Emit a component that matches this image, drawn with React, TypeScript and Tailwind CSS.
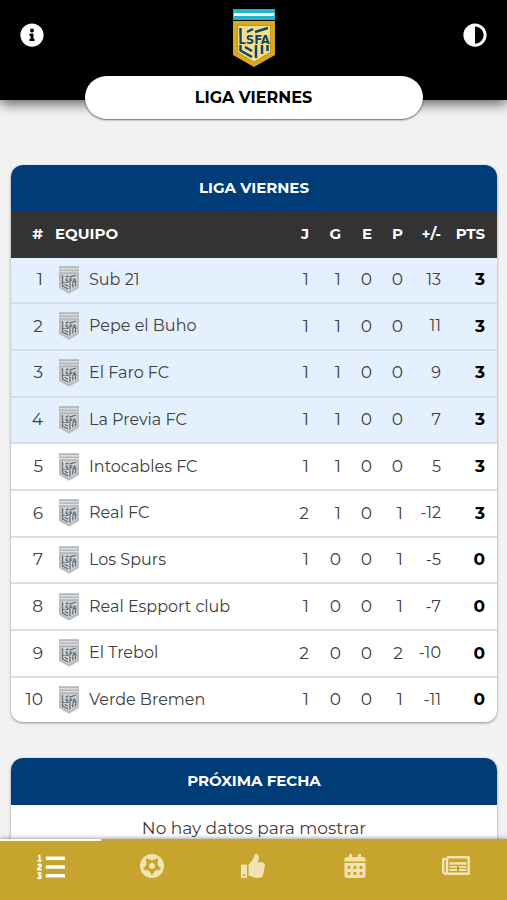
import React from 'react';
import { FaInfoCircle, FaAdjust, FaListOl, FaThumbsUp, FaCalendarAlt } from 'react-icons/fa';

const teams = [
  { name: 'Sub 21', j: 1, g: 1, e: 0, p: 0, diff: 13, pts: 3 },
  { name: 'Pepe el Buho', j: 1, g: 1, e: 0, p: 0, diff: 11, pts: 3 },
  { name: 'El Faro FC', j: 1, g: 1, e: 0, p: 0, diff: 9, pts: 3 },
  { name: 'La Previa FC', j: 1, g: 1, e: 0, p: 0, diff: 7, pts: 3 },
  { name: 'Intocables FC', j: 1, g: 1, e: 0, p: 0, diff: 5, pts: 3 },
  { name: 'Real FC', j: 2, g: 1, e: 0, p: 1, diff: -12, pts: 3 },
  { name: 'Los Spurs', j: 1, g: 0, e: 0, p: 1, diff: -5, pts: 0 },
  { name: 'Real Espport club', j: 1, g: 0, e: 0, p: 1, diff: -7, pts: 0 },
  { name: 'El Trebol', j: 2, g: 0, e: 0, p: 2, diff: -10, pts: 0 },
  { name: 'Verde Bremen', j: 1, g: 0, e: 0, p: 1, diff: -11, pts: 0 },
];

const colors = {
  full: { band: '#22b3cf', stripe: '#ffffff', edge: '#d9a81f', rim: '#c4931a', field: '#f8dd8d', ink: '#0d4768' },
  gray: { band: '#b4b8ba', stripe: '#dcdfe0', edge: '#bcbfc1', rim: '#adb0b2', field: '#d3d6d8', ink: '#5c6164' },
};

function Shield({ tone, className }: { tone: 'full' | 'gray'; className: string }) {
  const c = colors[tone];
  return (
    <svg viewBox="0 0 42 58" className={className} aria-hidden="true">
      <rect width="42" height="11" fill={c.band} />
      <rect x="1" y="4" width="40" height="3" fill={c.stripe} />
      <path d="M0 12H42V46L21 58L0 46Z" fill={c.edge} />
      <path d="M4 16H38V43.500L21 53.500L4 43.500Z" fill={c.rim} />
      <path d="M5 17H37V43L21 52.500L5 43Z" fill={c.field} />
      <text x="21" y="35" fill={c.ink} fontSize="13" fontFamily="'DejaVu Sans Condensed', 'DejaVu Sans', sans-serif" fontWeight="700" textAnchor="middle">LSFA</text>
      {/* bars over and under the initials */}
      <g fill="none" stroke={c.ink} strokeWidth="2.500">
        <path d="M7.500 19V26M14 23L20 20M22 23L35 19" />
        <path d="M7.500 36V41.500L19 48M12 38L19 42M23 36V49M29 36V45M34.500 36V42" />
      </g>
    </svg>
  );
}

function BallIcon() {
  return (
    <svg viewBox="0 0 24 24" className="w-6 h-6" aria-hidden="true">
      <circle cx="12" cy="12" r="12" fill="currentColor" />
      {/* five-armed seam pattern with a light centre */}
      <path
        d="M12 20.500L9.100 16L3.500 15L7.200 10.500L6.400 4.800L12 7L17.600 4.800L16.800 10.500L20.500 15L14.900 16Z"
        fill="#c6a42d"
        stroke="#c6a42d"
        strokeLinejoin="round"
      />
      <circle cx="12" cy="12" r="3" fill="currentColor" />
    </svg>
  );
}

function NewsIcon() {
  return (
    <svg viewBox="0 0 28 20" className="w-7 h-5" fill="none" stroke="currentColor" aria-hidden="true">
      <path d="M5 1.300H26.700V17.700H3.200C1.800 17.700 1.200 16.800 1.200 15.500V3H5V15.500C5 16.800 4.200 17.700 3.200 17.700" strokeWidth="2.400" strokeLinejoin="round" />
      <path d="M7.500 7.500H24.500" strokeWidth="2.500" />
      <path d="M7.500 10.800H15M17 10.800H24.500M7.500 14H15M17 14H24.500" strokeWidth="1.800" />
    </svg>
  );
}

export default function App() {
  return (
    <div className="h-screen flex flex-col overflow-hidden bg-[#f2f2f2] font-['Montserrat','Inter',sans-serif] text-[#404040]">
      <header className="relative z-10 shrink-0 h-[100px] bg-black shadow-[0_4px_12px_rgba(0,0,0,0.6)]">
        <div className="flex items-start justify-between px-5 pt-[9px]">
          <button aria-label="Información" className="mt-[14px] text-white"><FaInfoCircle className="w-6 h-6" /></button>
          <Shield tone="full" className="w-[42px] h-[58px]" />
          <button aria-label="Cambiar tema" className="mt-[14px] text-white"><FaAdjust className="w-6 h-6" /></button>
        </div>
        {/* Tournament name, hangs over the header edge */}
        <h1 className="absolute left-1/2 top-[76px] -translate-x-1/2 w-2/3 h-[43px] rounded-full bg-white text-black text-base font-bold flex items-center justify-center shadow-[0_1px_2px_rgba(0,0,0,0.6)]">
          LIGA VIERNES
        </h1>
      </header>

      <main className="flex-1 min-h-0 overflow-hidden px-[10px] pt-[65px] pl-[11px]">
        <section className="rounded-xl overflow-hidden bg-white shadow-[0_1px_3px_rgba(0,0,0,0.4)]">
          <h2 className="h-[46px] bg-[#003c78] text-white text-[15px] font-bold flex items-center justify-center">LIGA VIERNES</h2>
          <table className="w-full h-[511px] table-fixed border-collapse text-right text-[17px]">
            <colgroup>
              <col className="w-8" />
              <col />
              <col className="w-[32px]" />
              <col className="w-[32px]" />
              <col className="w-[31px]" />
              <col className="w-[31px]" />
              <col className="w-[38px]" />
              <col className="w-[56px]" />
            </colgroup>
            <thead className="bg-[#333333] text-white text-[15px]">
              <tr className="h-[47px]">
                <th>#</th>
                <th className="text-left pl-3">EQUIPO</th>
                <th>J</th>
                <th>G</th>
                <th>E</th>
                <th>P</th>
                <th>+/-</th>
                <th className="pr-3">PTS</th>
              </tr>
            </thead>
            <tbody>
              {teams.map((team, i) => (
                <tr key={team.name} className={i < 4 ? 'bg-[#e5f0fe] border-b-2 border-[#d5dde6]' : 'border-b-2 border-[#dedede] last:border-b-0'}>
                  <td>{i + 1}</td>
                  <td className="pl-4">
                    <div className="flex items-center gap-[10px]">
                      <Shield tone="gray" className="w-5 h-7 shrink-0" />
                      <span className="text-base whitespace-nowrap">{team.name}</span>
                    </div>
                  </td>
                  <td>{team.j}</td>
                  <td>{team.g}</td>
                  <td>{team.e}</td>
                  <td>{team.p}</td>
                  <td className="text-base">{team.diff}</td>
                  <td className="pr-3 font-bold text-black">{team.pts}</td>
                </tr>
              ))}
            </tbody>
          </table>
        </section>

        <section className="mt-9 rounded-xl overflow-hidden bg-white shadow-[0_1px_3px_rgba(0,0,0,0.4)]">
          <h2 className="h-[47px] bg-[#003c78] text-white text-[15px] font-bold flex items-center justify-center">PRÓXIMA FECHA</h2>
          <p className="h-[47px] flex items-center justify-center text-[17px]">No hay datos para mostrar</p>
        </section>
      </main>

      <nav className="relative z-10 shrink-0 h-[61px] grid grid-cols-5 bg-[#c6a42d] text-[#f2e3b5] shadow-[0_0_5px_rgba(0,0,0,0.5)]">
        <a href="#tabla" aria-label="Tabla" className="flex justify-center items-center pb-2 border-t-2 border-[#fffbe8] text-white"><FaListOl className="w-7 h-7" /></a>
        <a href="#partidos" aria-label="Partidos" className="flex justify-center items-center pb-2"><BallIcon /></a>
        <a href="#juego-limpio" aria-label="Juego limpio" className="flex justify-center items-center pb-2"><FaThumbsUp className="w-6 h-6" /></a>
        <a href="#fechas" aria-label="Fechas" className="flex justify-center items-center pb-2"><FaCalendarAlt className="w-6 h-6" /></a>
        <a href="#noticias" aria-label="Noticias" className="flex justify-center items-center pb-2"><NewsIcon /></a>
      </nav>
    </div>
  );
}
